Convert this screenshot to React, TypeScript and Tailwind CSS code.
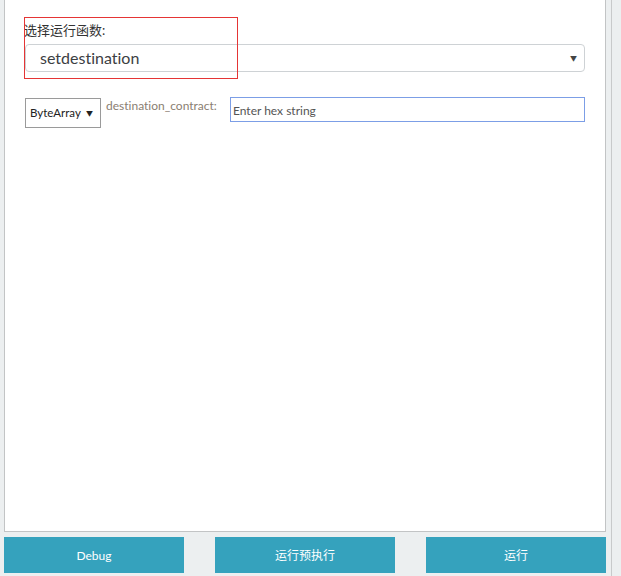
import React from "react";

const font = { fontFamily: 'Lato, "Noto Sans CJK SC", sans-serif' };

const App = () => {
  const buttons = ["Debug", "运行预执行", "运行"];
  return (
    <div
      className="flex h-[576px] w-[621px] bg-[#eceff0] overflow-hidden [font-variant-ligatures:none]"
      style={font}
    >
      <div className="flex w-[611px] flex-col pl-[4px] pr-[5px]">
        {/* main panel */}
        <div className="relative h-[532px] w-[602px] border-x border-b border-[#c2c4c5] bg-white pl-[20px] pr-[20px]">
          <div className="pt-[21px]">
            <div className="-ml-[1px] text-[13px] leading-[18px] text-[#333]">
              选择运行函数:
            </div>
            <div className="mt-[5px] flex h-[28px] items-center justify-between rounded-[4px] border border-[#ced2d5] pl-[14px] pr-[7px]">
              <span className="text-[16px] text-[#3c4043]">setdestination</span>
              <span className="text-[7px] text-[#444]">▼</span>
            </div>
          </div>

          <div className="mt-[25px] flex items-start">
            <div className="mt-[1px] flex h-[30px] w-[76px] items-center justify-between border border-[#9a9a9a] pl-[4px] pr-[7px]">
              <span className="text-[11.5px] text-[#222]">ByteArray</span>
              <span className="text-[7px] text-[#222]">▼</span>
            </div>
            <div className="ml-[5px] w-[124px] pt-[1px] text-[12px] leading-[16px] text-[#8a7e72]">
              destination_contract:
            </div>
            <input
              className="h-[25px] flex-1 border border-[#7c9ee6] px-[2px] pt-[1px] text-[12px] text-[#333] outline-none placeholder:text-[#555]"
              placeholder="Enter hex string"
            />
          </div>

          {/* highlight box */}
          <div className="absolute left-[19px] top-[17px] h-[62px] w-[214px] border border-[#e53535]" />
        </div>

        {/* action buttons */}
        <div className="mt-[5px] flex w-[602px] justify-between">
          {buttons.map((label, i) => (
            <button
              key={i}
              className="flex h-[36px] w-[180px] items-center justify-center pt-[2px] bg-[#35a2bd] text-[12px] text-white"
            >
              {label}
            </button>
          ))}
        </div>
      </div>
      <div className="h-full w-px bg-[#c8cacb]" />
    </div>
  );
};

export default App;
